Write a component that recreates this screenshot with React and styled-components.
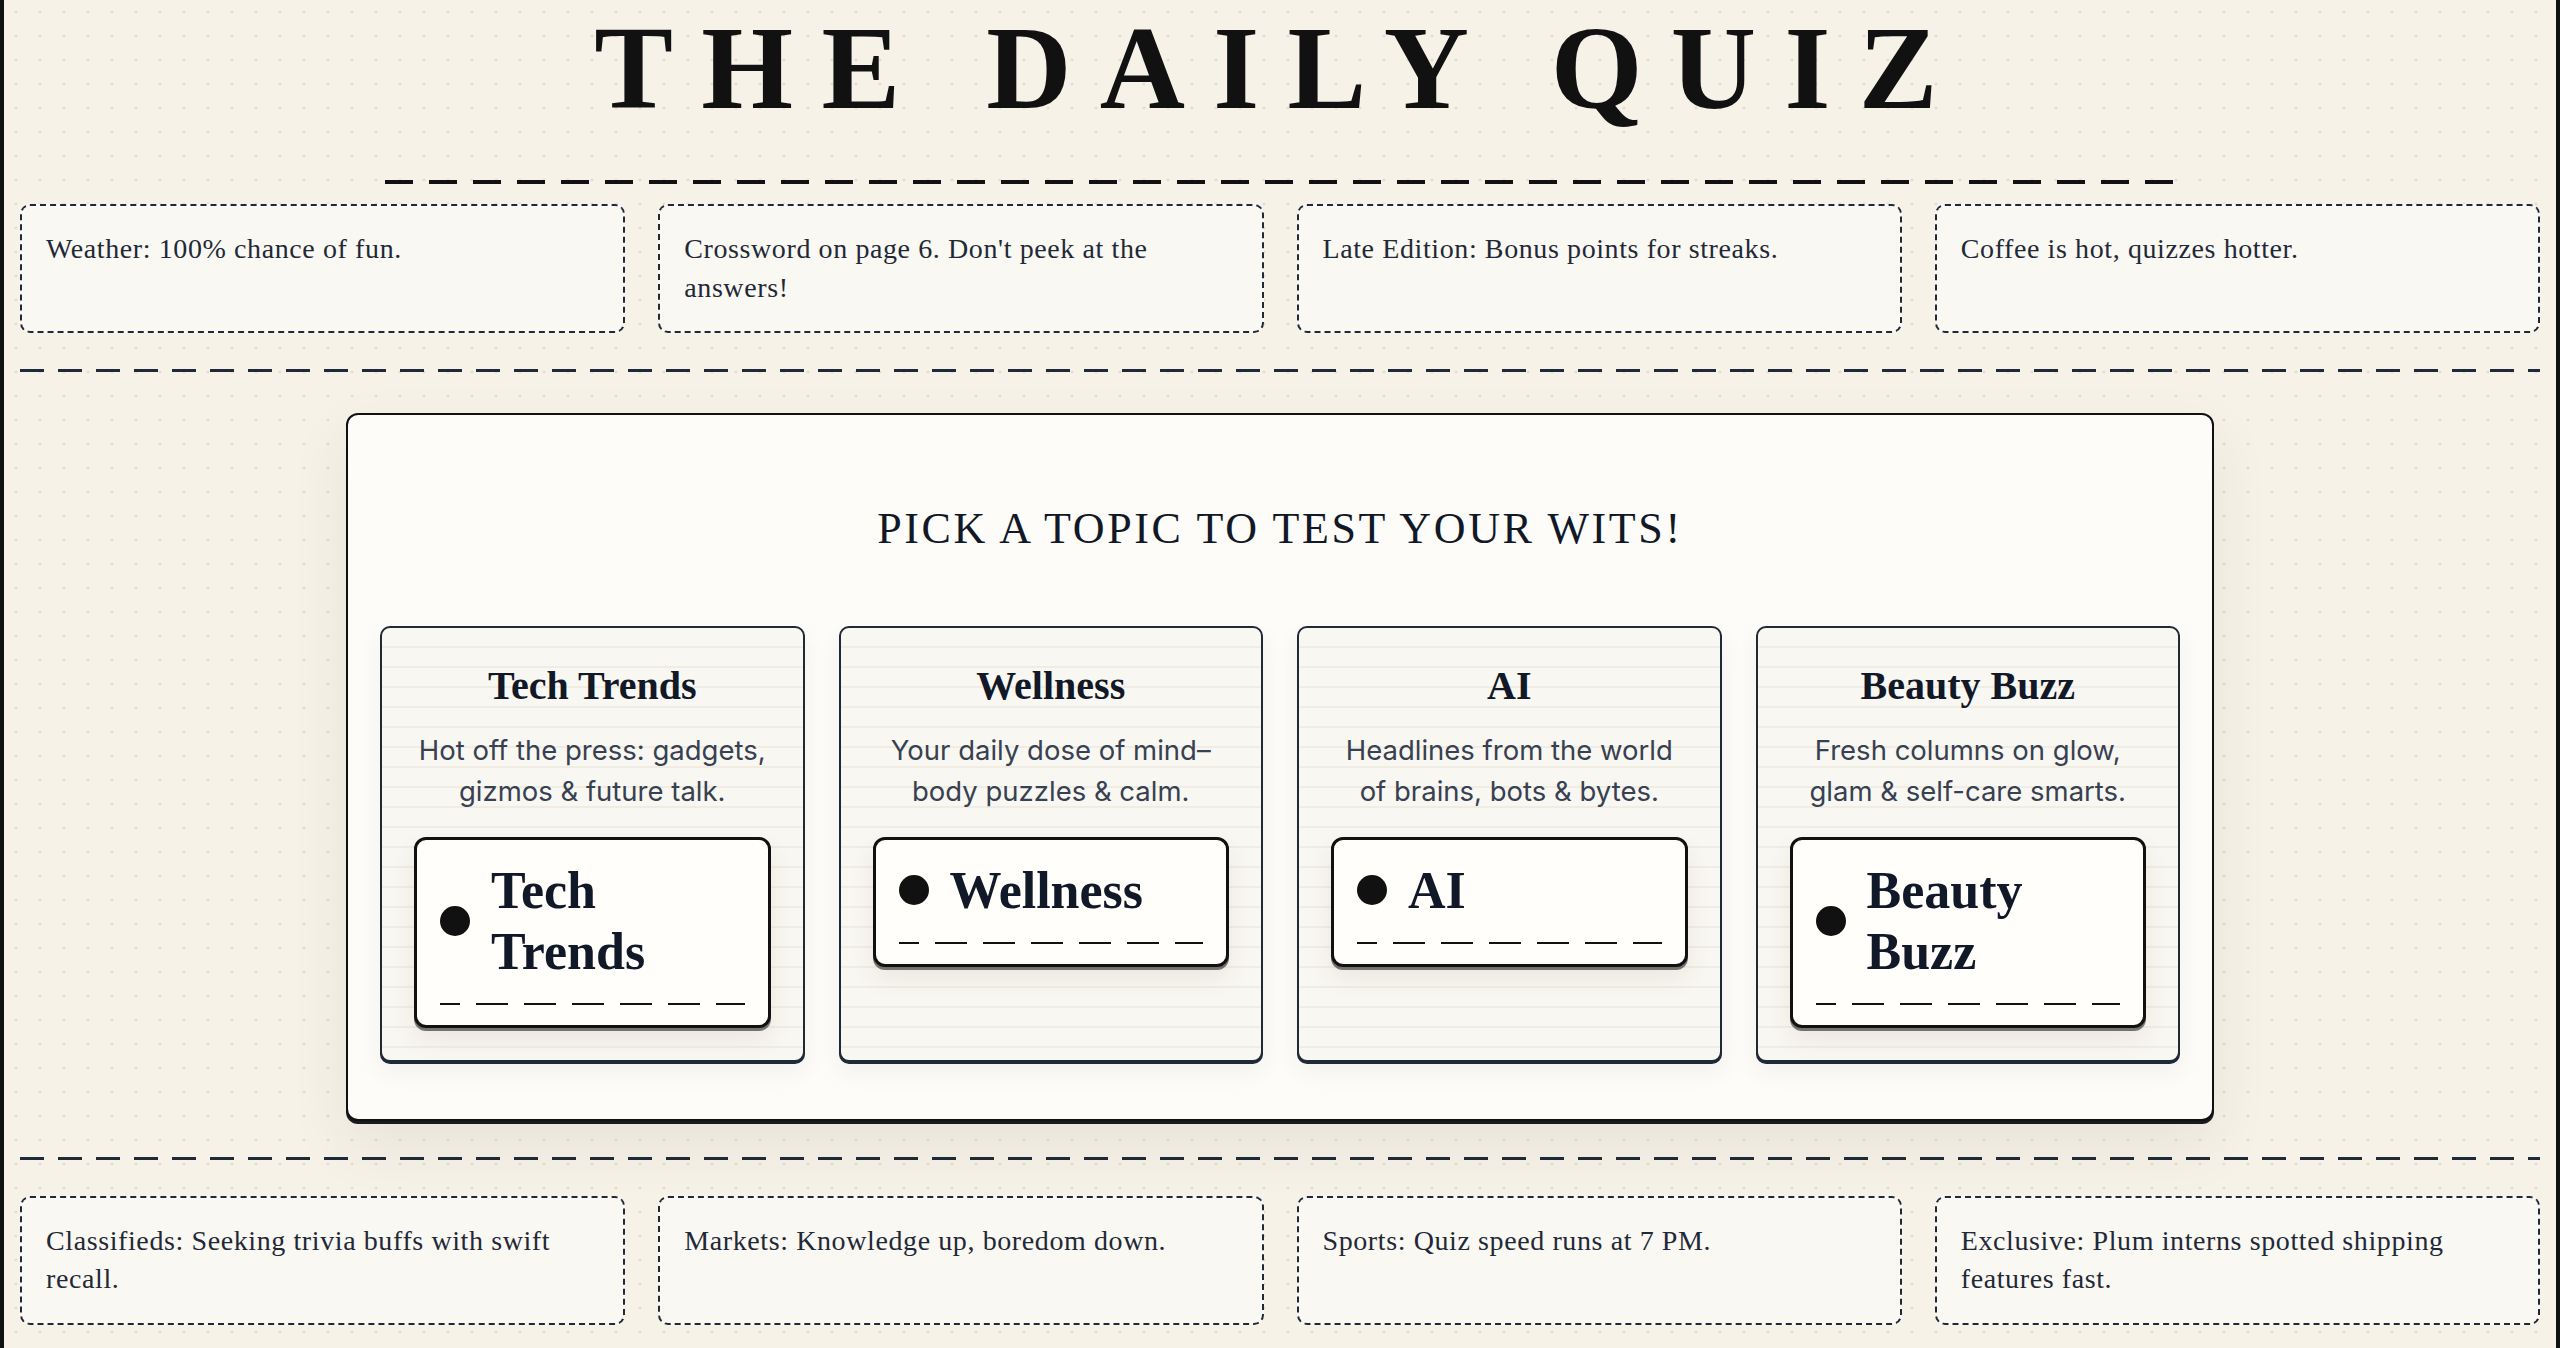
import styled, { createGlobalStyle } from 'styled-components';

const GlobalStyle = createGlobalStyle`
  html, body {
    margin: 0;
    padding: 0;
    background: #f5f1e7;
  }
  * {
    box-sizing: border-box;
  }
`;

const Page = styled.div`
  min-height: 100vh;
  padding: 10px 16px 24px;
  border-left: 4px solid #111;
  border-right: 4px solid #111;
  background-color: #f6f2e8;
  background-image: radial-gradient(circle, rgba(120, 105, 80, 0.14) 1.2px, transparent 1.8px);
  background-size: 24px 24px;
  font-family: 'Liberation Serif', 'Times New Roman', serif;
  color: #1f2937;
`;

const Masthead = styled.header`
  display: flex;
  flex-direction: column;
  align-items: center;
`;

const Title = styled.h1`
  margin: 0;
  font-family: 'Liberation Serif', 'Times New Roman', serif;
  font-weight: 700;
  font-size: 118px;
  line-height: 118px;
  letter-spacing: 0.24em;
  color: #111;
  white-space: nowrap;
`;

const TitleRule = styled.div`
  width: 71%;
  height: 4px;
  margin-top: 52px;
  background: repeating-linear-gradient(90deg, #111 0 28px, transparent 28px 44px);
`;

const BriefRow = styled.section`
  display: grid;
  grid-template-columns: repeat(4, 1fr);
  gap: 33px;
  margin-top: ${props => props.$top || '0px'};
`;

const Brief = styled.div`
  min-height: 129px;
  padding: 24px 24px 24px;
  border: 2px dashed #1f2937;
  border-radius: 10px;
  background: #faf8f2;
  font-size: 28px;
  line-height: 38.5px;
  letter-spacing: 0.6px;
  color: #1f2937;
`;

const Separator = styled.div`
  height: 3px;
  margin: 36px 0 ${props => props.$after || '36px'};
  background: repeating-linear-gradient(90deg, #1f2937 0 24px, transparent 24px 38px);
`;

const Board = styled.main`
  width: 100%;
  max-width: 1868px;
  margin: 0 auto;
  padding: 88px 32px 57px;
  border: 2px solid #111;
  border-radius: 12px;
  background: #fdfcf9;
  box-shadow: 0 3px 0 #1a1a1a, 0 24px 60px rgba(60, 45, 20, 0.08);
`;

const Heading = styled.h2`
  margin: 0 0 70px;
  text-align: center;
  font-weight: 400;
  font-size: 44px;
  line-height: 1.2;
  letter-spacing: 0.06em;
  color: #111827;
`;

const TopicGrid = styled.div`
  display: grid;
  grid-template-columns: repeat(4, 1fr);
  gap: 34px;
`;

const TopicCard = styled.article`
  display: flex;
  flex-direction: column;
  align-items: stretch;
  padding: 35px 32px 32px;
  border: 2px solid #1f2937;
  border-radius: 10px;
  text-align: center;
  background-color: #f9f7f1;
  background-image: repeating-linear-gradient(
    to bottom,
    transparent 0 18px,
    rgba(150, 130, 100, 0.09) 18px 20px
  );
  box-shadow: 0 2px 0 #1f2937, 0 10px 24px rgba(60, 45, 20, 0.06);
`;

const TopicTitle = styled.h3`
  margin: 0 0 21px;
  font-weight: 700;
  font-size: 40px;
  line-height: 46px;
  color: #111827;
`;

const TopicBlurb = styled.p`
  margin: 0 0 25px;
  font-family: Inter, 'Noto Sans', sans-serif;
  font-size: 27.5px;
  line-height: 41px;
  color: #374151;
`;

const TopicButton = styled.button`
  display: flex;
  flex-direction: column;
  width: 100%;
  padding: 20px 23px 20px;
  border: 3px solid #111;
  border-radius: 12px;
  background: #fffefb;
  box-shadow: 0 3px 0 rgba(17, 17, 17, 0.55), 0 12px 24px rgba(60, 45, 20, 0.08);
  font-family: 'Liberation Serif', 'Times New Roman', serif;
  text-align: left;
  cursor: pointer;
`;

const ButtonLine = styled.span`
  display: flex;
  align-items: center;
  gap: 21px;
`;

const Bullet = styled.span`
  flex: none;
  width: 30px;
  height: 30px;
  border-radius: 50%;
  background: #111;
`;

const ButtonLabel = styled.span`
  font-weight: 700;
  font-size: 52px;
  line-height: 61px;
  color: #111827;
`;

const Underline = styled.span`
  display: block;
  height: 2px;
  margin-top: 21px;
  background: repeating-linear-gradient(90deg, #111 0 32px, transparent 32px 48px);
  background-position: -12px 0;
`;

const topBriefs = [
  'Weather: 100% chance of fun.',
  "Crossword on page 6. Don't peek at the answers!",
  'Late Edition: Bonus points for streaks.',
  'Coffee is hot, quizzes hotter.',
];

const bottomBriefs = [
  'Classifieds: Seeking trivia buffs with swift recall.',
  'Markets: Knowledge up, boredom down.',
  'Sports: Quiz speed runs at 7 PM.',
  'Exclusive: Plum interns spotted shipping features fast.',
];

const topics = [
  { name: 'Tech Trends', blurb: 'Hot off the press: gadgets, gizmos & future talk.' },
  { name: 'Wellness', blurb: 'Your daily dose of mind–body puzzles & calm.' },
  { name: 'AI', blurb: 'Headlines from the world of brains, bots & bytes.' },
  { name: 'Beauty Buzz', blurb: 'Fresh columns on glow, glam & self-care smarts.' },
];

const App = () => {
  return (
    <>
      <GlobalStyle />
      <Page>
        <Masthead>
          <Title>THE DAILY QUIZ</Title>
          <TitleRule />
        </Masthead>

        <BriefRow $top="20px">
          {topBriefs.map(text => (
            <Brief key={text}>{text}</Brief>
          ))}
        </BriefRow>

        <Separator $after="41px" />

        <Board>
          <Heading>PICK A TOPIC TO TEST YOUR WITS!</Heading>
          <TopicGrid>
            {topics.map(topic => (
              <TopicCard key={topic.name}>
                <TopicTitle>{topic.name}</TopicTitle>
                <TopicBlurb>{topic.blurb}</TopicBlurb>
                <TopicButton type="button">
                  <ButtonLine>
                    <Bullet />
                    <ButtonLabel>{topic.name}</ButtonLabel>
                  </ButtonLine>
                  <Underline />
                </TopicButton>
              </TopicCard>
            ))}
          </TopicGrid>
        </Board>

        <Separator $after="36px" />

        <BriefRow>
          {bottomBriefs.map(text => (
            <Brief key={text}>{text}</Brief>
          ))}
        </BriefRow>
      </Page>
    </>
  );
};

export default App;
